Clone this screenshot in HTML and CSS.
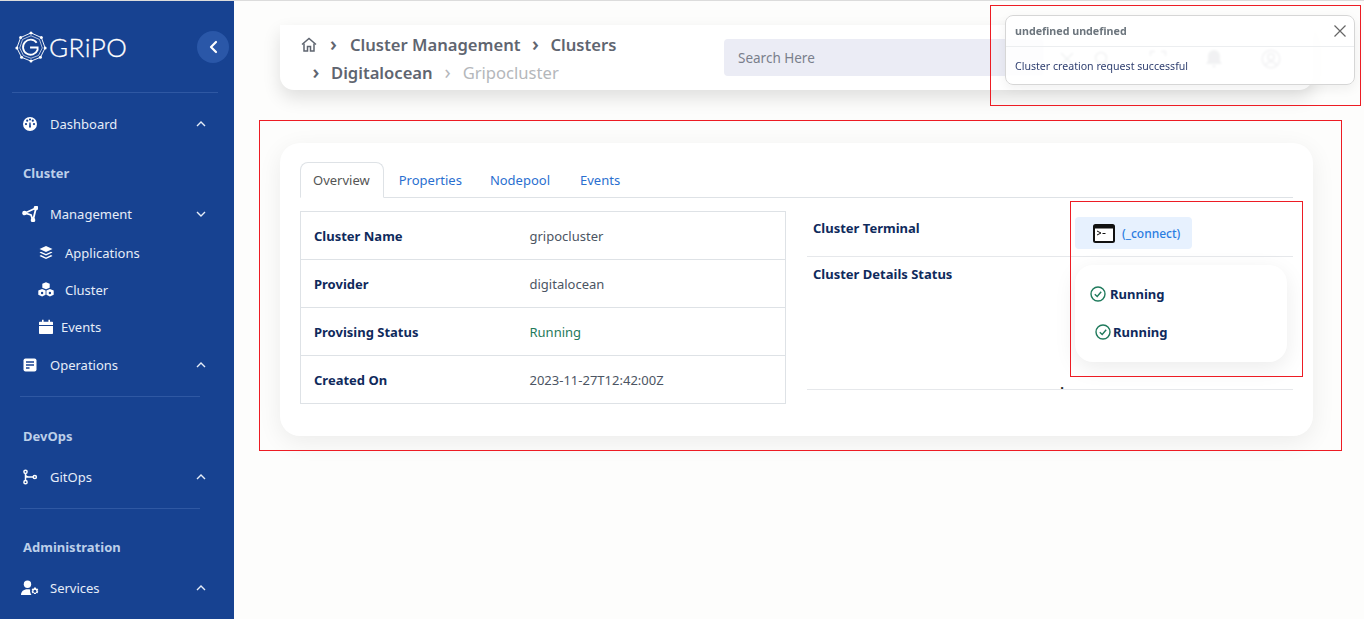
FILE: index.html
```html
<!DOCTYPE html>
<html lang="en">
<head>
    <meta charset="UTF-8">
    <meta name="viewport" content="width=device-width, initial-scale=1.0">
    <title>Gripo - Cluster</title>
    <link rel="stylesheet" href="styles.css">
</head>
<body>
    <div class="app">
        <aside class="sidebar">
            <div class="brand">
                <svg class="logo" width="32" height="34" viewBox="0 0 34 34" fill="none" stroke="#fff" stroke-width="1">
                    <polygon points="17,2 28,7 32,18 27,28 17,32 7,28 2,18 6,7"/>
                    <polygon points="17,5 26,9 29,18 25,26 17,29 9,26 5,18 8,9" stroke-width="0.7"/>
                    <path d="M23 12.5 A8 8 0 1 0 24 20 L24 17.5 H16" stroke-width="2"/>
                    <g fill="#fff" stroke="none">
                        <circle cx="17" cy="2" r="1.6"/><circle cx="28" cy="7" r="1.6"/><circle cx="32" cy="18" r="1.6"/><circle cx="27" cy="28" r="1.6"/>
                        <circle cx="17" cy="32" r="1.6"/><circle cx="7" cy="28" r="1.6"/><circle cx="2" cy="18" r="1.6"/><circle cx="6" cy="7" r="1.6"/>
                    </g>
                </svg>
                <span class="brand-name">GRiPO</span>
                <span class="toggle">
                    <svg width="10" height="14" viewBox="0 0 10 14" fill="none" stroke="#fff" stroke-width="2.2" stroke-linecap="round" stroke-linejoin="round"><path d="M8 2 3 7l5 5"/></svg>
                </span>
            </div>

            <nav class="nav">
                <a class="nav-item first">
                    <svg class="nav-icon" viewBox="0 0 16 16" fill="#fff"><path d="M8 1a7 7 0 1 0 0 14A7 7 0 0 0 8 1Zm-4 8.2a1.1 1.1 0 1 1 0-2.2 1.1 1.1 0 0 1 0 2.2Zm1.2-3.4a1.1 1.1 0 1 1 0-2.2 1.1 1.1 0 0 1 0 2.2ZM8 4.6a1.1 1.1 0 1 1 0-2.2 1.1 1.1 0 0 1 0 2.2Zm1 6.9H7l.4-5h1.2l.4 5Zm1.8-5.7a1.1 1.1 0 1 1 0-2.2 1.1 1.1 0 0 1 0 2.2ZM12 9.2A1.1 1.1 0 1 1 12 7a1.1 1.1 0 0 1 0 2.2Z"/></svg>
                    <span>Dashboard</span>
                    <svg class="chev" viewBox="0 0 12 8" fill="none" stroke="#e6edf8" stroke-width="1.4"><path d="M2 6l4-4 4 4"/></svg>
                </a>

                <div class="nav-label">Cluster</div>
                <a class="nav-item">
                    <svg class="nav-icon" viewBox="0 0 16 16" fill="none" stroke="#fff" stroke-width="1.8"><path d="M14 2 3 7l6 2 2 5.5L14 2Z"/><circle cx="14" cy="2" r="1.4" fill="#fff"/><circle cx="2.5" cy="7" r="1.4" fill="#fff"/><circle cx="11" cy="14" r="1.4" fill="#fff"/></svg>
                    <span>Management</span>
                    <svg class="chev" viewBox="0 0 12 8" fill="none" stroke="#e6edf8" stroke-width="1.4"><path d="M2 2l4 4 4-4"/></svg>
                </a>
                <div class="sub-list">
                    <a class="sub-item">
                        <svg class="sub-icon" viewBox="0 0 16 16" fill="#fff"><path d="M8 1 1.5 4 8 7l6.5-3L8 1Z"/><path d="M3 6.700 1.500 7.500 8 10.500l6.500-3-1.500-.8L8 9 3 6.700Z"/><path d="M3 10 1.500 10.900 8 14l6.500-3.100L13 10l-5 2.400L3 10Z"/></svg>
                        <span>Applications</span>
                    </a>
                    <a class="sub-item">
                        <svg class="sub-icon" viewBox="0 0 16 16" fill="#fff"><path d="M8 .3 4.300 1.800v4L8 7.300l3.700-1.500v-4L8 .3Z"/><path fill-rule="evenodd" d="M4.100 7.100.3 8.600v4.200l3.800 1.700 3.500-1.700V8.600L4.100 7.100Zm0 2.700a1.200 1.200 0 1 1 0 2.400 1.200 1.200 0 0 1 0-2.400Z"/><path fill-rule="evenodd" d="M11.900 7.100 8.400 8.600v4.200l3.500 1.700 3.800-1.700V8.600l-3.800-1.500Zm0 2.700a1.200 1.200 0 1 1 0 2.400 1.200 1.200 0 0 1 0-2.400Z"/></svg>
                        <span>Cluster</span>
                    </a>
                    <a class="sub-item events">
                        <svg class="sub-icon" viewBox="0 0 16 16" fill="#fff"><path d="M4 .8h1.600v2h4.800V.8H12v2h2.200a.8.8 0 0 1 .8.8V6H1V3.600a.8.8 0 0 1 .8-.8H4v-2Z"/><path d="M1 7h14v7.200a.8.8 0 0 1-.8.8H1.800a.8.8 0 0 1-.8-.8V7Z"/></svg>
                        <span>Events</span>
                    </a>
                </div>
                <a class="nav-item">
                    <svg class="nav-icon" viewBox="0 0 16 16"><rect x="1.500" y="1.500" width="13" height="13" rx="2" fill="#fff"/><path d="M4 5h8M4 8h8M4 11h3.500" stroke="#174291" stroke-width="1.500"/></svg>
                    <span>Operations</span>
                    <svg class="chev" viewBox="0 0 12 8" fill="none" stroke="#e6edf8" stroke-width="1.4"><path d="M2 6l4-4 4 4"/></svg>
                </a>
                <div class="nav-divider"></div>

                <div class="nav-label flush">DevOps</div>
                <a class="nav-item">
                    <svg class="nav-icon" viewBox="0 0 16 16" fill="none" stroke="#fff" stroke-width="1.500"><circle cx="3.500" cy="2.800" r="1.600"/><circle cx="3.500" cy="13.200" r="1.600"/><circle cx="12.800" cy="8" r="1.600"/><path d="M3.500 4.400v7.200M3.500 8h7.700M3.500 5.500c0 1.800 1.500 2.500 3 2.500"/></svg>
                    <span>GitOps</span>
                    <svg class="chev" viewBox="0 0 12 8" fill="none" stroke="#e6edf8" stroke-width="1.4"><path d="M2 6l4-4 4 4"/></svg>
                </a>
                <div class="nav-divider short"></div>

                <div class="nav-label flush">Administration</div>
                <a class="nav-item services">
                    <svg class="nav-icon wide" viewBox="0 0 20 16" fill="#fff"><circle cx="7.500" cy="4.200" r="3.700"/><path d="M1 15c0-3.600 2.500-5.800 6.500-5.800 1 0 1.900.1 2.700.4-.4 1.800.1 3.800 1.300 5.400H1Z"/><path fill-rule="evenodd" d="M15.800 7.500l.4 1.200 1.200-.3.900 1.500-.9.900.9.900-.9 1.500-1.200-.3-.4 1.200h-1.700l-.4-1.200-1.200.3-.9-1.500.9-.9-.9-.9.900-1.500 1.200.3.400-1.200h1.700Zm-.9 2.300a1.500 1.500 0 1 0 0 3 1.500 1.500 0 0 0 0-3Z"/></svg>
                    <span>Services</span>
                    <svg class="chev" viewBox="0 0 12 8" fill="none" stroke="#e6edf8" stroke-width="1.4"><path d="M2 6l4-4 4 4"/></svg>
                </a>
            </nav>
        </aside>

        <main class="main">
            <header class="topbar">
                <ol class="crumbs">
                    <li class="crumb-home">
                        <svg width="16" height="15" viewBox="0 0 16 15" fill="none" stroke="#5f6570" stroke-width="1.500"><path d="M1 7.500 8 1.500l7 6"/><path d="M3 6.500V14h3.500V9.500h3V14H13V6.500"/></svg>
                    </li>
                    <li><span class="sep">&#8250;</span>Cluster Management</li>
                    <li><span class="sep">&#8250;</span>Clusters</li>
                    <li class="crumb-wrap"><span class="sep">&#8250;</span>Digitalocean</li>
                    <li class="crumb-last"><span class="sep">&#8250;</span>Gripocluster</li>
                </ol>
                <div class="search">Search Here</div>
                <div class="top-icons">
                    <svg class="icon-close" width="18" height="18" viewBox="0 0 18 18" fill="none" stroke="#8a8f98" stroke-width="1.500"><path d="M3 3l12 12M15 3 3 15"/></svg>
                    <svg width="18" height="18" viewBox="0 0 18 18" fill="none" stroke="#8a8f98" stroke-width="1.500"><circle cx="8" cy="8" r="5.500"/><path d="M12 12l4 4"/></svg>
                    <svg width="18" height="18" viewBox="0 0 18 18" fill="none" stroke="#8a8f98" stroke-width="1.500"><path d="M1.500 6V1.500H6M12 1.500h4.500V6M16.500 12v4.500H12M6 16.500H1.500V12"/></svg>
                    <svg width="18" height="20" viewBox="0 0 18 20" fill="#8a8f98"><path d="M9 1a6 6 0 0 0-6 6v5l-2 3h16l-2-3V7a6 6 0 0 0-6-6Z"/><path d="M7 16.500a2 2 0 0 0 4 0H7Z"/></svg>
                    <svg width="20" height="20" viewBox="0 0 20 20" fill="none" stroke="#8a8f98" stroke-width="1.500"><circle cx="10" cy="10" r="8.800"/><circle cx="10" cy="8" r="3.200"/><path d="M4.500 16.500c1-2.600 3-3.500 5.500-3.500s4.500.9 5.500 3.500"/></svg>
                </div>
            </header>

            <section class="card">
                <ul class="tabs">
                    <li class="tab active">Overview</li>
                    <li class="tab">Properties</li>
                    <li class="tab">Nodepool</li>
                    <li class="tab">Events</li>
                </ul>

                <div class="panes">
                    <table class="info-table">
                        <tr><th>Cluster Name</th><td>gripocluster</td></tr>
                        <tr><th>Provider</th><td>digitalocean</td></tr>
                        <tr><th>Provising Status</th><td class="ok">Running</td></tr>
                        <tr><th>Created On</th><td>2023-11-27T12:42:00Z</td></tr>
                    </table>

                    <div class="status-panel">
                        <div class="status-row terminal-row">
                            <div class="status-label">Cluster Terminal</div>
                            <div>
                                <a class="connect">
                                    <svg width="22" height="19" viewBox="0 0 22 19"><rect x="1" y="1" width="20" height="17" rx="1.500" fill="#fff" stroke="#111" stroke-width="2"/><rect x="1" y="1" width="20" height="3.500" fill="#111"/><path d="M4 7l4 2-4 2" fill="none" stroke="#111" stroke-width="1"/><path d="M9.500 9.500h3" stroke="#111"/></svg>
                                    <span>(_connect)</span>
                                </a>
                            </div>
                        </div>
                        <div class="status-row details-row">
                            <div class="status-label details-label">
                                <span>Cluster Details Status</span>
                                <span class="stray">.</span>
                            </div>
                            <div class="status-card">
                                <div class="running first-run">
                                    <svg width="16" height="16" viewBox="0 0 16 16" fill="none" stroke="#1f7a5c" stroke-width="1.400"><circle cx="8" cy="8" r="7"/><path d="M4.800 8.200 7.200 10.500 11.200 5.800"/></svg>
                                    <span>Running</span>
                                </div>
                                <div class="running second-run">
                                    <svg width="16" height="16" viewBox="0 0 16 16" fill="none" stroke="#1f7a5c" stroke-width="1.400"><circle cx="8" cy="8" r="7"/><path d="M4.800 8.200 7.200 10.500 11.200 5.800"/></svg>
                                    <span>Running</span>
                                </div>
                            </div>
                        </div>
                    </div>
                </div>
            </section>
        </main>
    </div>

    <div class="toast">
        <div class="toast-head">
            <strong>undefined undefined</strong>
            <svg width="14" height="14" viewBox="0 0 14 14" fill="none" stroke="#666" stroke-width="1.200"><path d="M1.500 1.500l11 11M12.500 1.500l-11 11"/></svg>
        </div>
        <div class="toast-body">Cluster creation request successful</div>
    </div>

    <!-- red marks drawn over the screenshot -->
    <div class="mark mark-toast"></div>
    <div class="mark mark-card"></div>
    <div class="mark mark-status"></div>
</body>
</html>
```

FILE: styles.css
```css
* {
    box-sizing: border-box;
}
html, body {
    margin: 0;
    height: 100%;
    overflow: hidden;
}
body {
    font-family: "Noto Sans", Arial, sans-serif;
    font-size: 13px;
    background-color: #fdfdfc;
    color: #0f2a5c;
    border-top: 1px solid #dcdcdc;
}
.app {
    display: flex;
    height: 618px;
}

/* Sidebar */
.sidebar {
    width: 234px;
    flex-shrink: 0;
    background-color: #174291;
    color: #e6edf8;
}
.brand {
    display: flex;
    align-items: center;
    height: 92px;
    margin: 0 16px 0 12px;
    padding: 0 0 0 3px;
    border-bottom: 1px solid #2f58a3;
}
.brand-name {
    font-family: Lato, sans-serif;
    font-size: 26px;
    font-weight: 300;
    letter-spacing: 0.5px;
    color: #fff;
    margin-left: 2px;
    -webkit-text-stroke: 0.3px #fff;
}
.toggle {
    display: flex;
    align-items: center;
    justify-content: center;
    width: 32px;
    height: 32px;
    border-radius: 50%;
    background-color: #2a57a8;
    margin-left: auto;
    margin-right: -11px;
}
.nav-item {
    display: flex;
    align-items: center;
    height: 38px;
    padding: 0 27px 0 22px;
}
.nav-item.first {
    margin-top: 12px;
}
.nav-item span {
    margin-left: 12px;
}
.nav-icon {
    width: 16px;
    height: 16px;
    flex-shrink: 0;
}
.nav-icon.wide {
    width: 20px;
    height: 16px;
    margin-left: -2px;
    margin-right: -2px;
}
.chev {
    width: 12px;
    height: 8px;
    margin-left: auto;
}
.sub-list {
    padding: 1px 0;
}
.sub-item {
    display: flex;
    align-items: center;
    height: 37px;
    padding-left: 38px;
}
.sub-item span {
    margin-left: 11px;
}
.sub-item.events span {
    margin-left: 7px;
}
.sub-icon {
    width: 16px;
    height: 16px;
    flex-shrink: 0;
}
.nav-label {
    height: 38px;
    line-height: 38px;
    padding-left: 23px;
    margin: 11px 0 3px;
    font-weight: 700;
    color: #bccfe9;
}
.nav-label.flush {
    margin-top: 0;
}
.nav-divider {
    height: 1px;
    margin: 12px 34px 20px 20px;
    background-color: #2f58a3;
}
.nav-divider.short {
    margin-bottom: 19px;
}
.services {
    margin-top: 3px;
}

/* Top bar */
.main {
    flex: 1;
    min-width: 0;
    padding: 24px 51px 0 46px;
}
.topbar {
    display: flex;
    align-items: center;
    height: 65px;
    background-color: #fff;
    border-radius: 0 0 14px 14px;
    box-shadow: 0 8px 18px rgba(0, 0, 0, 0.12);
    padding-left: 21px;
}
.crumbs {
    display: flex;
    flex-wrap: wrap;
    width: 340px;
    margin: 0;
    padding: 2px 0 0;
    list-style: none;
    font-size: 16.6px;
    font-weight: 600;
    line-height: 28px;
    color: #5f6570;
}
.crumbs li {
    white-space: nowrap;
}
.sep {
    display: inline-block;
    width: 30px;
    text-align: center;
    font-size: 20px;
    line-height: 20px;
}
.crumb-home {
    display: flex;
    align-items: center;
    height: 28px;
}
.crumb-home + li .sep {
    width: 33px;
}
.crumb-last {
    color: #b4b7bb;
    font-weight: 400;
}
.search {
    width: 320px;
    height: 37px;
    line-height: 38px;
    margin-left: 83px;
    padding-left: 14px;
    border-radius: 4px;
    background-color: #ebecf5;
    color: #7a7f8c;
    font-size: 13.5px;
}
.top-icons {
    display: flex;
    align-items: center;
    gap: 38px;
    margin-top: 3px;
    margin-left: 14px;
}
.icon-close {
    margin-right: -21px;
}

/* Main card */
.card {
    margin-top: 53px;
    height: 293px;
    padding: 19px 20px 0;
    background-color: #fff;
    border-radius: 20px;
    box-shadow: 0 6px 24px rgba(0, 0, 0, 0.07);
}
.tabs {
    display: flex;
    height: 36px;
    margin: 0;
    padding: 0;
    list-style: none;
    border-bottom: 1px solid #dee2e6;
}
.tab {
    height: 36px;
    line-height: 36px;
    padding: 0 14px;
    color: #2a6fd0;
}
.tab:last-child {
    margin-left: 2px;
}
.tab.active {
    color: #555;
    background-color: #fff;
    border: 1px solid #dee2e6;
    border-bottom-color: #fff;
    border-radius: 8px 8px 0 0;
    line-height: 34px;
    padding: 0 13px 0 12px;
    margin-right: 1px;
}
.panes {
    display: flex;
    gap: 21px;
    margin-top: 13px;
}
.info-table {
    width: 486px;
    height: 193px;
    flex-shrink: 0;
    border-collapse: collapse;
}
.info-table th,
.info-table td {
    height: 48px;
    padding: 0 13px;
    border: 1px solid #dee2e6;
    text-align: left;
}
.info-table th {
    width: 216px;
    font-weight: 700;
    border-right: none;
}
.info-table td {
    border-left: none;
    color: #4c5563;
}
.info-table td.ok {
    color: #1f7a5c;
}
.status-panel {
    flex: 1;
    min-width: 0;
}
.status-row {
    display: flex;
    border-bottom: 1px solid #e6e8eb;
}
.terminal-row {
    height: 46px;
}
.details-row {
    height: 133px;
}
.status-label {
    width: 268px;
    flex-shrink: 0;
    padding-left: 6px;
    font-weight: 700;
}
.terminal-row .status-label {
    padding-top: 8px;
}
.details-label {
    display: flex;
    flex-direction: column;
    justify-content: space-between;
    padding-top: 8px;
}
.stray {
    align-self: flex-end;
    margin-right: 11px;
    line-height: 10px;
    color: #222;
}
.connect {
    display: flex;
    align-items: center;
    gap: 7px;
    width: 117px;
    height: 32px;
    margin-top: 6px;
    padding-left: 18px;
    border-radius: 4px;
    background-color: #e7f1fe;
    color: #2a7de1;
    font-size: 12px;
    font-weight: 500;
}
.status-card {
    width: 212px;
    height: 97px;
    margin-top: 8px;
    padding-top: 19px;
    background-color: #fff;
    border-radius: 18px;
    box-shadow: 0 6px 22px rgba(0, 0, 0, 0.08);
    font-weight: 700;
}
.running {
    display: flex;
    align-items: center;
    height: 20px;
}
.first-run {
    padding-left: 15px;
    gap: 4px;
}
.second-run {
    padding-left: 20px;
    margin-top: 18px;
    gap: 2px;
}

/* Toast */
.toast {
    position: absolute;
    left: 1005px;
    top: 15px;
    width: 350px;
    height: 70px;
    background-color: rgba(255, 255, 255, 0.88);
    backdrop-filter: blur(1px);
    border: 1px solid #d6d6d6;
    border-radius: 8px;
    box-shadow: 0 4px 12px rgba(0, 0, 0, 0.06);
    font-size: 10.6px;
}
.toast-head {
    display: flex;
    align-items: center;
    justify-content: space-between;
    height: 31px;
    padding: 0 7px 1px 9px;
    border-bottom: 1px solid #eceef0;
    color: #6c757d;
    font-size: 10.7px;
}
.toast-body {
    padding: 12px 9px 0;
    color: #2f3f70;
}

/* Red marks */
.mark {
    position: absolute;
    border: 1px solid #ed1c24;
    pointer-events: none;
}
.mark-toast {
    left: 990px;
    top: 5px;
    width: 371px;
    height: 101px;
}
.mark-card {
    left: 259px;
    top: 120px;
    width: 1083px;
    height: 331px;
}
.mark-status {
    left: 1070px;
    top: 201px;
    width: 233px;
    height: 176px;
}
```
